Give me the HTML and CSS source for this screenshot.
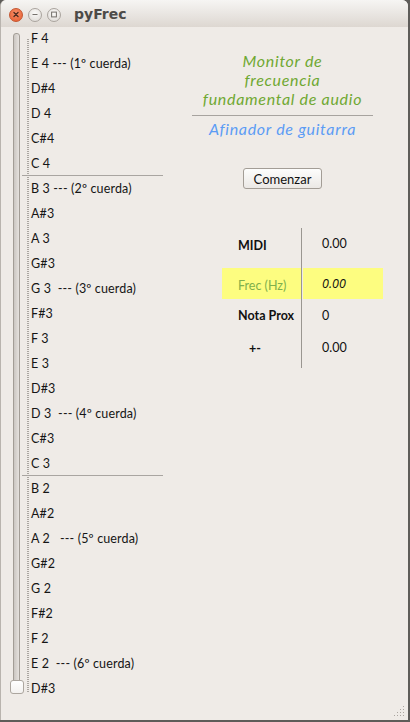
FILE: index.html
```html
<!DOCTYPE html>
<html lang="es">
<head>
<meta charset="utf-8">
<title>pyFrec</title>
<link rel="stylesheet" href="styles.css">
</head>
<body>
<div class="window">
  <header class="titlebar">
    <div class="wbtns">
      <span class="wb close"><svg width="13" height="13" viewBox="0 0 13 13"><path d="M4.3 4.3 L8.7 8.7 M8.7 4.3 L4.3 8.7" stroke="#4a2a1e" stroke-width="1.4" stroke-linecap="round"/></svg></span>
      <span class="wb"><svg width="13" height="13" viewBox="0 0 13 13"><path d="M3.8 6.5 H9.2" stroke="#75716c" stroke-width="1.2"/></svg></span>
      <span class="wb"><svg width="13" height="13" viewBox="0 0 13 13"><rect x="3.9" y="3.9" width="5.2" height="5.2" fill="none" stroke="#75716c" stroke-width="1.1"/></svg></span>
    </div>
    <span class="title">pyFrec</span>
  </header>
  <main class="content">
    <section class="left">
      <div class="slider">
        <div class="groove"></div>
        <div class="handle"></div>
      </div>
      <ul class="notes">
        <li>F 4</li>
        <li>E 4 --- (1º cuerda)</li>
        <li>D#4</li>
        <li>D 4</li>
        <li>C#4</li>
        <li class="sep">C 4</li>
        <li>B 3 --- (2º cuerda)</li>
        <li>A#3</li>
        <li>A 3</li>
        <li>G#3</li>
        <li>G 3&nbsp; --- (3º cuerda)</li>
        <li>F#3</li>
        <li>F 3</li>
        <li>E 3</li>
        <li>D#3</li>
        <li>D 3&nbsp; --- (4º cuerda)</li>
        <li>C#3</li>
        <li class="sep">C 3</li>
        <li>B 2</li>
        <li>A#2</li>
        <li>A 2&nbsp;&nbsp; --- (5º cuerda)</li>
        <li>G#2</li>
        <li>G 2</li>
        <li>F#2</li>
        <li>F 2</li>
        <li>E 2&nbsp; --- (6º cuerda)</li>
        <li>D#3</li>
      </ul>
    </section>
    <section class="right">
      <h1 class="heading">Monitor de<br>frecuencia<br>fundamental de audio</h1>
      <hr class="rule">
      <h2 class="sub">Afinador de guitarra</h2>
      <button class="btn" type="button">Comenzar</button>
      <div class="readout">
        <div class="lab r1">MIDI</div><div class="val r1">0.00</div>
        <div class="lab r2 hl frec">Frec (Hz)</div><div class="val r2 hl it">0.00</div>
        <div class="lab r3">Nota Prox</div><div class="val r3">0</div>
        <div class="lab r4 pm">+-</div><div class="val r4">0.00</div>
      </div>
    </section>
  </main>
  <svg class="grip" width="12" height="12" viewBox="0 0 12 12">
    <g fill="#aaa59f">
      <rect x="9" y="0" width="1" height="1"/>
      <rect x="6" y="3" width="1" height="1"/><rect x="9" y="3" width="1" height="1"/>
      <rect x="3" y="6" width="1" height="1"/><rect x="6" y="6" width="1" height="1"/><rect x="9" y="6" width="1" height="1"/>
      <rect x="0" y="9" width="1" height="1"/><rect x="3" y="9" width="1" height="1"/><rect x="6" y="9" width="1" height="1"/><rect x="9" y="9" width="1" height="1"/>
    </g>
  </svg>
</div>
</body>
</html>
```

FILE: styles.css
```css
* { box-sizing: border-box; }

html, body {
  margin: 0;
  padding: 0;
}

body {
  width: 410px;
  height: 722px;
  background: #5e5c59;
  font-family: "Lato", "Open Sans", sans-serif;
  overflow: hidden;
}

.window {
  position: relative;
  width: 408px;
  height: 720px;
  background: #efebe7;
  border-radius: 6px 6px 0 0;
  border-left: 1px solid #b9b4ae;
  overflow: hidden;
  display: flex;
  flex-direction: column;
}

.titlebar {
  height: 27px;
  flex: none;
  display: flex;
  align-items: center;
  background: linear-gradient(#f6f5f3, #ddd7d1);
  padding-left: 8px;
}

.wbtns {
  display: flex;
  gap: 5px;
  margin-top: 2px;
}

.wb {
  width: 14px;
  height: 14px;
  border-radius: 50%;
  border: 1px solid #aaa49e;
  background: radial-gradient(circle at 50% 35%, #fbfaf9, #dcd8d3);
  display: flex;
  align-items: center;
  justify-content: center;
}

.wb svg { display: block; }

.wb.close {
  border-color: #c4552f;
  background: radial-gradient(circle at 50% 35%, #f8906a, #e55a2c);
}

.title {
  margin-left: 13px;
  margin-top: 1px;
  font-family: "DejaVu Sans", sans-serif;
  font-weight: bold;
  font-size: 14px;
  color: #4d4b48;
}

.content {
  flex: 1;
  display: flex;
}

.left {
  width: 170px;
  display: flex;
}

.slider {
  position: relative;
  width: 21px;
}

.groove {
  margin: 6px 0 0 12px;
  width: 7px;
  height: 660px;
  border: 1px solid #a39d96;
  border-radius: 3px;
  background: linear-gradient(to right, #cbc6c1, #e6e2de);
}

.handle {
  position: absolute;
  left: 9px;
  top: 653px;
  width: 14px;
  height: 14px;
  border: 1px solid #aca69f;
  border-radius: 3px;
  background: linear-gradient(#ffffff, #f3f1ef);
}

.notes {
  list-style: none;
  margin: -1px 0 0 0;
  padding: 0;
  width: 141px;
  background: repeating-linear-gradient(to bottom, #aaa6a1 0 1px, transparent 1px 2px) 5px 13px / 2px 654px no-repeat;
}

.notes li {
  height: 25px;
  line-height: 25px;
  padding-left: 9px;
  font-size: 12.5px;
  letter-spacing: 0.15px;
  color: #151515;
  white-space: pre;
}

.notes li.sep {
  border-bottom: 1px solid #a9a5a1;
}

.right {
  width: 223px;
  display: flex;
  flex-direction: column;
  align-items: center;
  padding-top: 24px;
}

.heading {
  margin: 0;
  font-size: 16px;
  line-height: 19px;
  font-weight: normal;
  font-style: italic;
  letter-spacing: 0.7px;
  color: #6fa832;
  text-align: center;
}

.rule {
  width: 181px;
  margin: 7px 0 0 0;
  border: 0;
  border-top: 1px solid #a7a39f;
  height: 0;
}

.sub {
  margin: 3px 0 0 0;
  font-size: 16px;
  line-height: 19px;
  font-weight: normal;
  font-style: italic;
  letter-spacing: 0.7px;
  color: #5c9cf5;
}

.btn {
  margin-top: 30px;
  width: 79px;
  height: 21px;
  padding: 0;
  border: 1px solid #a39d96;
  border-radius: 3px;
  background: linear-gradient(#fdfdfc, #ebe8e5);
  font-family: "Lato", sans-serif;
  font-size: 13px;
  color: #111;
}

.readout {
  margin-top: 39px;
  align-self: flex-start;
  margin-left: 51px;
  display: grid;
  grid-template-columns: 80px 80px;
  grid-template-rows: 40px 31px 32px 37px;
  column-gap: 1px;
}

.lab, .val {
  display: flex;
  align-items: center;
  font-size: 12.5px;
  color: #111;
}

.lab {
  padding-left: 16px;
  border-right: 1px solid #9a9691;
  font-weight: bold;
}

.val {
  padding-left: 19px;
}

.r1.lab { padding-bottom: 5px; }
.r1.val { padding-bottom: 9px; }
.r2.lab { padding-top: 3px; }
.r4.lab { padding-left: 27px; padding-bottom: 3px; }
.r4.val { padding-bottom: 4px; }

.hl { background: #fdfd80; }
.frec { color: #7fb04c; font-weight: normal; }
.val.it { font-style: italic; font-family: "Open Sans", "Lato", sans-serif; }

.grip {
  position: absolute;
  right: 2px;
  bottom: 2px;
}
```
